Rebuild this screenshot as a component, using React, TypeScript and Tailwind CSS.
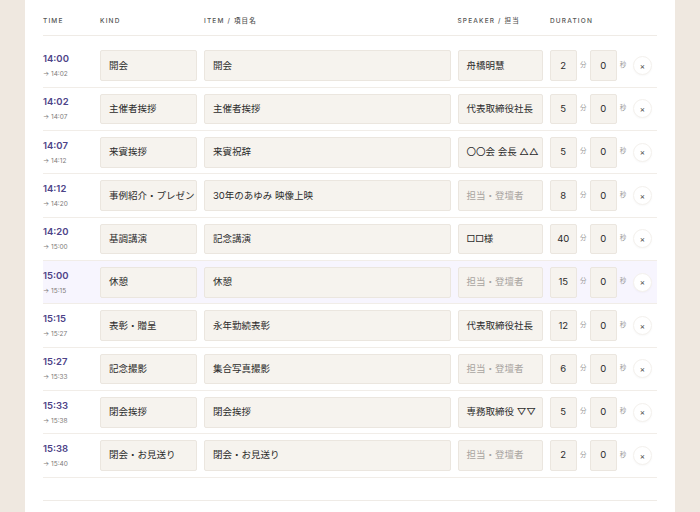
import React from "react";

interface Row {
  start: string;
  end: string;
  kind: string;
  item: string;
  speaker: string;
  min: number;
  sec: number;
  active?: boolean;
}

const rows: Row[] = [
  { start: "14:00", end: "14:02", kind: "開会", item: "開会", speaker: "舟橋明慧", min: 2, sec: 0 },
  { start: "14:02", end: "14:07", kind: "主催者挨拶", item: "主催者挨拶", speaker: "代表取締役社長", min: 5, sec: 0 },
  { start: "14:07", end: "14:12", kind: "来賓挨拶", item: "来賓祝辞", speaker: "〇〇会 会長 △△", min: 5, sec: 0 },
  { start: "14:12", end: "14:20", kind: "事例紹介・プレゼン", item: "30年のあゆみ 映像上映", speaker: "", min: 8, sec: 0 },
  { start: "14:20", end: "15:00", kind: "基調講演", item: "記念講演", speaker: "□□様", min: 40, sec: 0 },
  { start: "15:00", end: "15:15", kind: "休憩", item: "休憩", speaker: "", min: 15, sec: 0, active: true },
  { start: "15:15", end: "15:27", kind: "表彰・贈呈", item: "永年勤続表彰", speaker: "代表取締役社長", min: 12, sec: 0 },
  { start: "15:27", end: "15:33", kind: "記念撮影", item: "集合写真撮影", speaker: "", min: 6, sec: 0 },
  { start: "15:33", end: "15:38", kind: "閉会挨拶", item: "閉会挨拶", speaker: "専務取締役 ▽▽", min: 5, sec: 0 },
  { start: "15:38", end: "15:40", kind: "閉会・お見送り", item: "閉会・お見送り", speaker: "", min: 2, sec: 0 },
];

const font = {
  fontFamily: '"Inter", "Noto Sans CJK JP", sans-serif',
};

function Field({ value, placeholder, className }: { value: string; placeholder?: string; className: string }) {
  return (
    <div
      className={`h-[30.67px] flex items-center px-[8px] rounded-[2px] bg-[#f6f3ee] border border-[#ebe6df] text-[9.5px] whitespace-nowrap overflow-hidden ${className} ${
        value ? "text-[#2b2b2b]" : "text-[#a8a4a0]"
      }`}
    >
      {value || placeholder}
    </div>
  );
}

function NumField({ value }: { value: number }) {
  return (
    <div className="h-[30.67px] w-[26.5px] flex items-center justify-center rounded-[2px] bg-[#f6f3ee] border border-[#ebe6df] text-[9.5px] text-[#2b2b2b]">
      {value}
    </div>
  );
}

export default function App() {
  return (
    <div className="min-h-screen bg-[#efe8e0] px-[25px]" style={font}>
      <div className="bg-white min-h-[512px] px-[18px] pt-[16px]">
        {/* Header */}
        <div className="flex items-center h-[11px] mb-[8px] text-[6.5px] tracking-[0.18em] text-[#555] font-medium">
          <div className="w-[57px]">TIME</div>
          <div className="w-[104px]">KIND</div>
          <div className="w-[253.5px]">ITEM / 項目名</div>
          <div className="w-[92.5px]">SPEAKER / 担当</div>
          <div>DURATION</div>
        </div>
        <div className="border-b border-[#efebe6]" />

        {/* Rows */}
        <div className="pt-[8.5px]">
          {rows.map((r, i) => (
            <div
              key={i}
              className={`flex items-center h-[43.33px] border-b border-[#f1ede8] ${r.active ? "bg-[#f7f5fe]" : ""}`}
            >
              <div className="w-[57px] flex flex-col pt-[1px]">
                <span className="text-[9.5px] leading-[12px] font-semibold text-[#4d4388]">{r.start}</span>
                <span className="text-[6.5px] leading-[10px] mt-[4px] text-[#7d7a78]">→ {r.end}</span>
              </div>
              <Field value={r.kind} className="w-[97px]" />
              <Field value={r.item} className="w-[246.5px] ml-[7px]" />
              <Field value={r.speaker} placeholder="担当・登壇者" className="w-[85.5px] ml-[7px]" />
              <div className="ml-[7px] flex items-center">
                <NumField value={r.min} />
                <span className="w-[13.5px] text-center text-[6.5px] text-[#999]">分</span>
                <NumField value={r.sec} />
                <span className="w-[13px] text-center text-[6.5px] text-[#999]">秒</span>
                <button className="ml-[3.5px] w-[19px] h-[19px] rounded-full bg-white border border-[#f4f1ed] shadow-[0_1px_2px_rgba(0,0,0,0.03)] flex items-center justify-center text-[8px] text-[#444] leading-none">
                  ×
                </button>
              </div>
            </div>
          ))}
          <div className="h-[23px] border-b border-[#efebe6]" />
        </div>
      </div>
    </div>
  );
}
